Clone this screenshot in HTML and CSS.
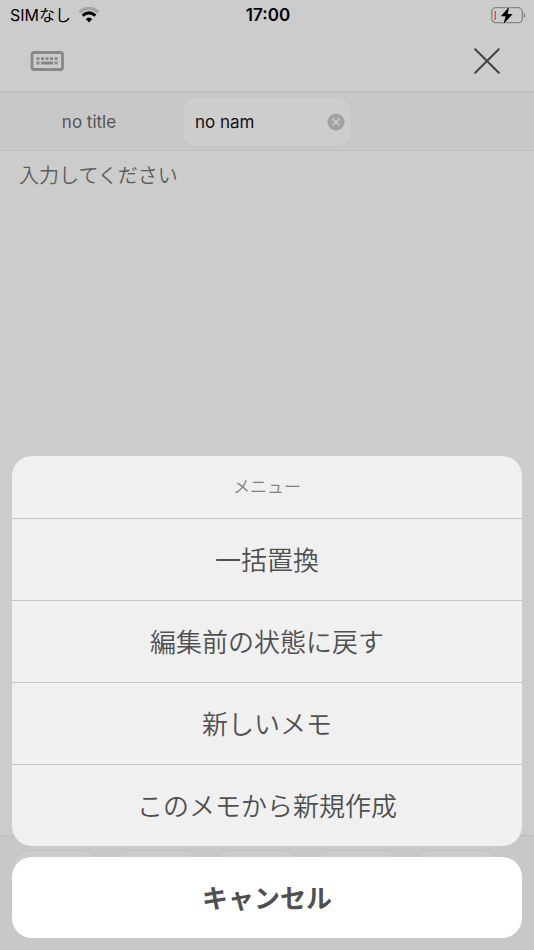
FILE: index.html
```
<!DOCTYPE html>
<html lang="ja">
<head>
  <meta charset="UTF-8" />
  <title>メモ</title>
  <meta name="viewport" content="width=device-width, initial-scale=1.0" />
  <link rel="stylesheet" href="styles.css">
</head>
<body>

<div class="status-bar">
  <div class="carrier">
    <span>SIMなし</span>
    <svg class="wifi" width="22" height="16" viewBox="0 0 22 16" aria-hidden="true">
      <path d="M1.500 5.200Q11-2.800 20.500 5.200" fill="none" stroke="#a3a3a3" stroke-width="3" />
      <path d="M4.600 8.600Q11 3.200 17.400 8.600" fill="none" stroke="#000" stroke-width="3" />
      <path d="M7.800 12Q11 9 14.200 12L11 15.400Z" fill="#000" />
    </svg>
  </div>
  <div class="clock">17:00</div>
  <div class="battery">
    <svg width="36" height="20" viewBox="0 0 36 20" aria-hidden="true">
      <rect x="1.700" y="2.700" width="30.600" height="15" rx="4" fill="none" stroke="#858585" stroke-width="1.300" />
      <path d="M34.200 8Q35.700 10.200 34.200 12.400Z" fill="#858585" stroke="#858585" />
      <rect x="4.500" y="6" width="1.400" height="9" fill="#f0413a" />
      <path d="M19.300 1.600L10.800 11.200H15.600L13.400 19.200L22.700 9H17.700Z" fill="#000" stroke="#ccc" stroke-width="2" paint-order="stroke" />
    </svg>
  </div>
</div>

<header class="nav">
  <button class="icon-button" aria-label="キーボード">
    <svg width="34" height="20" viewBox="0 0 34 20">
      <rect x="2" y="1.500" width="30.500" height="17" rx="2" fill="none" stroke="#888" stroke-width="2.800" />
      <path d="M6.500 7.600h3M11 7.600h3M15.500 7.600h3M20 7.600h3M24.500 7.600h3M6.500 12h3M11 12h12M24.500 12h3" stroke="#888" stroke-width="2.800" />
    </svg>
  </button>
  <button class="icon-button" aria-label="閉じる">
    <svg width="26" height="26" viewBox="0 0 26 26">
      <path d="M1.200 1.200L24.800 24.800M24.800 1.200L1.200 24.800" stroke="#444" stroke-width="2" stroke-linecap="round" />
    </svg>
  </button>
</header>

<nav class="tabs">
  <button class="tab">no title</button>
  <div class="tab tab-active">
    <button class="tab-name">no nam</button>
    <button class="tab-close" aria-label="タブを閉じる">
      <svg width="18" height="18" viewBox="0 0 18 18">
        <circle cx="9" cy="9" r="8.600" fill="#a2a2a2" />
        <path d="M5.600 5.600L12.400 12.400M12.400 5.600L5.600 12.400" stroke="#ccc" stroke-width="1.500" />
      </svg>
    </button>
  </div>
</nav>

<textarea class="editor" aria-label="メモ本文" placeholder="入力してください"></textarea>

<footer class="toolbar">
  <button class="chip" aria-label="ツール1"></button>
  <button class="chip" aria-label="ツール2"></button>
  <button class="chip" aria-label="ツール3"></button>
  <button class="chip" aria-label="ツール4"></button>
  <button class="chip" aria-label="ツール5"></button>
</footer>

<!-- action sheet -->
<div class="sheet" role="dialog" aria-labelledby="sheet-title">
  <div class="sheet-menu">
    <h2 class="sheet-title" id="sheet-title">メニュー</h2>
    <button class="sheet-item">一括置換</button>
    <button class="sheet-item">編集前の状態に戻す</button>
    <button class="sheet-item">新しいメモ</button>
    <button class="sheet-item">このメモから新規作成</button>
  </div>
  <button class="sheet-cancel">キャンセル</button>
</div>

</body>
</html>
```
FILE: styles.css
```
* {
  box-sizing: border-box;
}

body {
  display: flex;
  flex-direction: column;
  min-height: 100vh;
  margin: 0;
  background: #ccc;
  color: #000;
  font-family: Inter, "Noto Sans CJK JP", sans-serif;
}

button {
  padding: 0;
  border: none;
  background: none;
  color: inherit;
  font: inherit;
  cursor: pointer;
}

svg {
  display: block;
}

.status-bar {
  display: grid;
  grid-template-columns: 1fr auto 1fr;
  align-items: center;
  height: 30px;
  padding: 0 8px 0 10px;
  font-size: 17px;
  line-height: 30px;
}

.carrier {
  display: flex;
  align-items: center;
  gap: 7px;
  font-size: 16px;
}

.clock {
  font-weight: 600;
}

.battery {
  justify-self: end;
}

.nav {
  display: flex;
  align-items: center;
  justify-content: space-between;
  height: 61px;
  padding: 0 34px 0 30px;
}

.tabs {
  display: flex;
  align-items: center;
  gap: 8px;
  height: 60px;
  padding: 0 4px;
  border-top: 2px solid #c1c1c1;
  border-bottom: 1px solid #bebebe;
  background: #c8c8c8;
  font-size: 17px;
}

.tab {
  width: 170px;
  height: 50px;
  color: #555;
}

.tab-active {
  display: flex;
  align-items: center;
  justify-content: space-between;
  padding: 0 6px 0 12px;
  border: 1px solid #c5c5c5;
  border-radius: 14px;
  background: #cdcdcd;
  color: #111;
}

.editor {
  flex: 1;
  width: 100%;
  padding: 10px 19px;
  border: none;
  outline: none;
  resize: none;
  background: none;
  color: #111;
  font: inherit;
  font-size: 20px;
  font-weight: 350;
  line-height: 30px;
}

.editor::placeholder {
  color: #5c5c5c;
  opacity: 1;
}

.toolbar {
  display: flex;
  gap: 15px;
  height: 115px;
  padding: 14px;
  overflow: hidden;
  border-top: 1px solid #bebebe;
  background: #c8c8c8;
}

.chip {
  flex: none;
  width: 85px;
  height: 50px;
  border: 1px solid #c0c0c0;
  border-radius: 14px;
  background: #ccc;
}

.sheet {
  position: fixed;
  right: 12px;
  bottom: 12px;
  left: 12px;
  color: #505050;
  font-size: 26px;
}

.sheet-menu {
  margin-bottom: 11px;
  overflow: hidden;
  border-radius: 20px;
  background: #f0f0f0;
}

.sheet-title {
  margin: 0;
  color: #808080;
  font-size: 17px;
  font-weight: 350;
  line-height: 62px;
  text-align: center;
}

.sheet-item {
  display: block;
  width: 100%;
  height: 82px;
  padding-bottom: 2px;
  border-top: 1px solid #c4c4c4;
  font-weight: 350;
}

.sheet-cancel {
  width: 100%;
  height: 81px;
  padding-bottom: 2px;
  border-radius: 20px;
  background: #fff;
  font-weight: 700;
}
```
